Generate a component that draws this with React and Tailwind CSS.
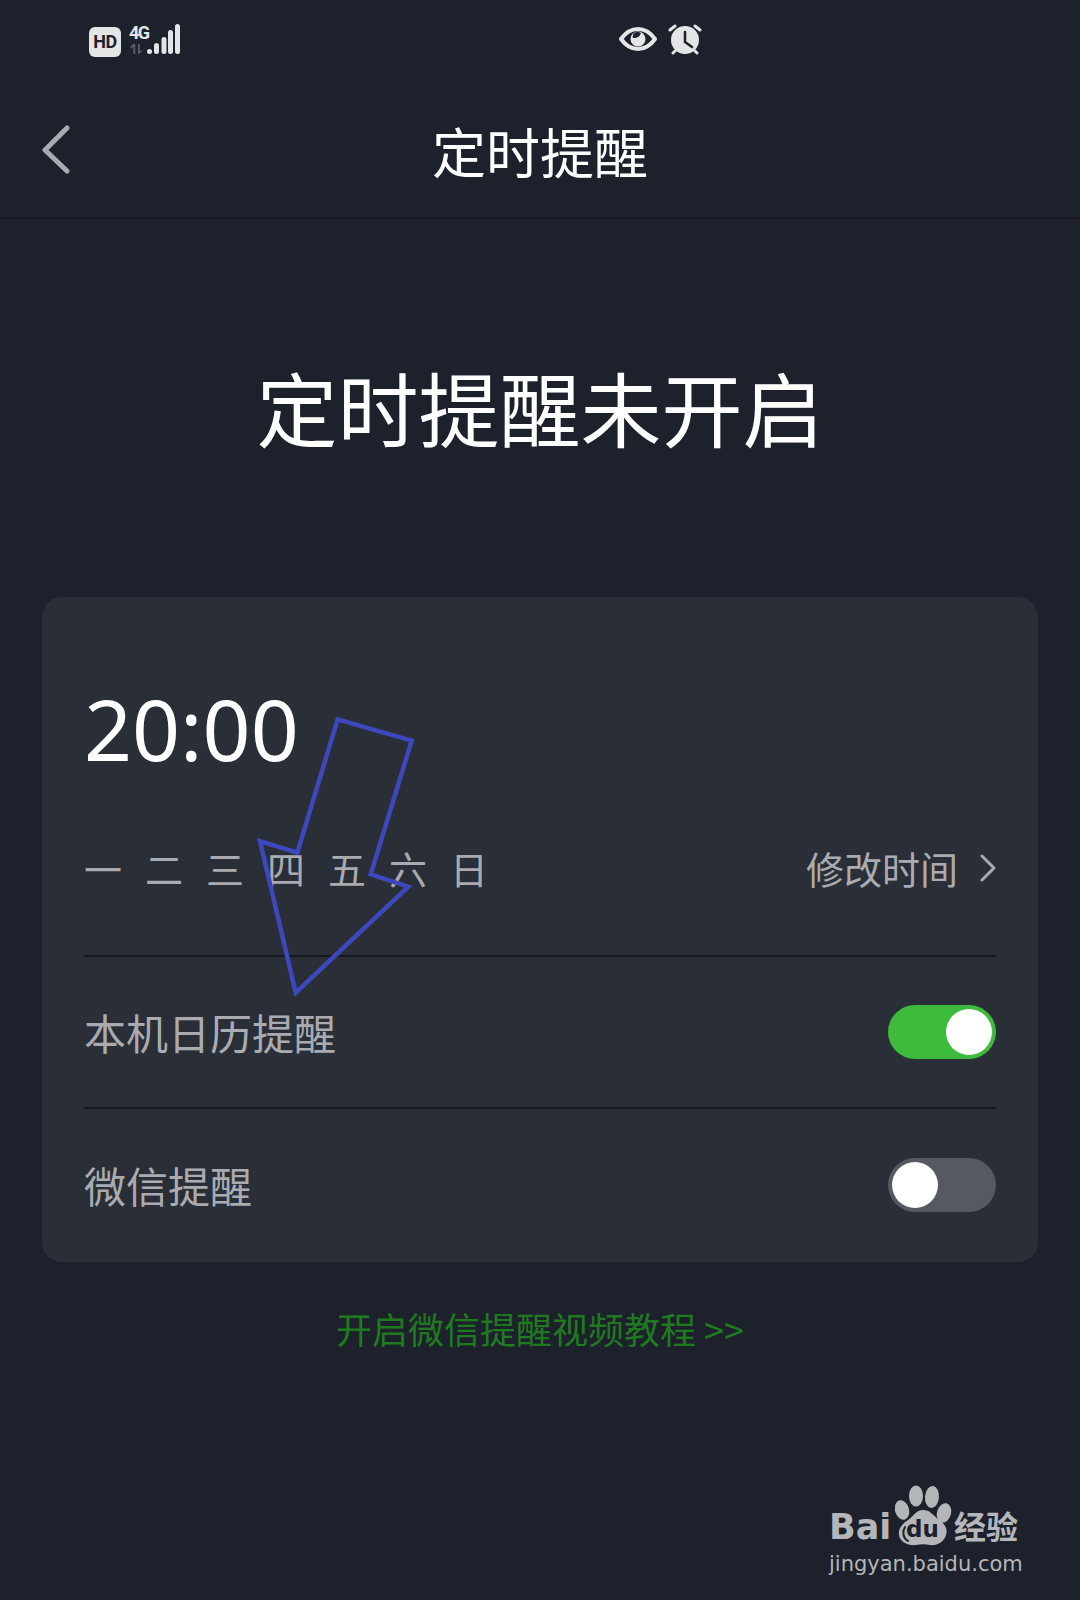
import React from 'react';

const cjk = 'font-["Noto_Sans_CJK_SC","Noto_Sans",sans-serif]';
const days = ['一', '二', '三', '四', '五', '六', '日'];

const Toggle = ({ on }) => (
  <div className={`flex h-[54px] w-[108px] items-center rounded-full px-[4px] ${on ? 'justify-end bg-[#3dbb3d]' : 'justify-start bg-[#565962]'}`}>
    <div className="h-[46px] w-[46px] rounded-full bg-white" />
  </div>
);

const Row = ({ label, on, height }) => (
  <div className={`flex items-center justify-between ${height}`}>
    <span className="text-[42px] leading-none text-[#a9abb0]">{label}</span>
    <Toggle on={on} />
  </div>
);

const StatusBar = () => (
  <div className="flex h-[80px] items-start pl-[89px] pt-[24px]">
    <div className="mt-[3px] flex h-[30px] w-[32px] items-center justify-center rounded-[6px] bg-[#e4e5e6] font-['Roboto',sans-serif] text-[18px] font-bold leading-none tracking-[-0.5px] text-[#1d212b]">
      HD
    </div>
    <div className="ml-[8px] flex h-[30px] w-[18px] flex-col">
      <span className="font-['Roboto',sans-serif] text-[18px] font-bold leading-[17px] tracking-[-1.5px] text-[#e4e5e6]">4G</span>
      <svg className="mt-[3px]" width="16" height="11" viewBox="0 0 16 11" fill="#5b5e64">
        <path d="M4 0h2v11H4V3.5L1 5V3zM9 0h2v7.5h3.5L9.5 11H9z" />
      </svg>
    </div>
    <svg width="33" height="31" viewBox="0 0 33 31" fill="#e4e5e6">
      <rect x="0" y="25" width="5" height="5" rx="2.5" />
      <rect x="7" y="19" width="5" height="11" rx="2.5" />
      <rect x="14.5" y="13" width="5" height="17" rx="2.5" />
      <rect x="21" y="6" width="5" height="24" rx="2.5" />
      <rect x="28" y="0" width="5" height="30" rx="2.5" />
    </svg>
    <svg className="ml-[439px] mt-[3px]" width="38" height="24" viewBox="0 0 38 24" fill="none">
      <path d="M2 12C7 5 13 2 19 2s12 3 17 10c-5 7-11 10-17 10S7 19 2 12z" stroke="#e4e5e6" strokeWidth="4" strokeLinejoin="round" />
      <circle cx="19" cy="12" r="7.5" fill="#e4e5e6" />
      <path d="M22 6c-1 3-3 5-8 5-1-3 1-6 4-6 2 0 3 0 4 1z" fill="#1d212b" />
    </svg>
    <svg className="ml-[11px]" width="34" height="32" viewBox="0 0 34 32" fill="none">
      <ellipse cx="17" cy="16" rx="14" ry="14" fill="#e4e5e6" />
      <path d="M17 8v10l7 5" stroke="#1d212b" strokeWidth="2.5" strokeLinecap="round" strokeLinejoin="round" />
      <path d="M2 6l5-4M32 6l-5-4M5 29l2-2M29 29l-2-2" stroke="#e4e5e6" strokeWidth="3" strokeLinecap="round" />
    </svg>
  </div>
);

const BaiduLogo = () => (
  <div className="absolute left-[829px] top-[1485px] flex w-[200px] flex-col text-[#b4b6b9]">
    <div className="flex h-[62px] items-end">
      <span className="w-[66px] font-['DejaVu_Sans',sans-serif] text-[35px] font-bold leading-[40px]">Bai</span>
      <div className="relative h-[62px] w-[58px] shrink-0">
        <svg className="absolute inset-0" width="58" height="62" viewBox="0 0 58 62" fill="#b4b6b9">
          <ellipse cx="7" cy="25" rx="7" ry="10" transform="rotate(-15 7 25)" />
          <ellipse cx="21" cy="11" rx="7" ry="10.5" />
          <ellipse cx="37" cy="12" rx="7" ry="11" transform="rotate(5 37 12)" />
          <ellipse cx="49" cy="28" rx="7" ry="10" transform="rotate(15 49 28)" />
          <path d="M28 25c7 0 10 5 16 10 6 4 9 9 7 15-2 7-9 11-16 10-4-1-9-1-14 0-8 1-16-3-17-10-1-6 3-11 9-15 6-4 8-10 15-10z" />
          <path d="M10 42c-3 5-2 11 3 14" stroke="#1d212b" strokeWidth="2" fill="none" strokeLinecap="round" />
        </svg>
        <span className="absolute left-[11px] top-[31px] font-['DejaVu_Sans',sans-serif] text-[23px] font-bold leading-[26px] text-[#1d212b]">du</span>
      </div>
      <span className={`ml-[1px] ${cjk} text-[32px] font-bold leading-[44px]`}>经验</span>
    </div>
    <span className="mt-[3px] font-['DejaVu_Sans',sans-serif] text-[21px] leading-[28px]">jingyan.baidu.com</span>
  </div>
);

const App = () => {
  return (
    <div className={`relative h-[1600px] w-[1080px] overflow-hidden bg-[#1d212b] ${cjk}`}>
      <StatusBar />

      {/* Header */}
      <div className="relative flex h-[139px] items-center justify-center border-b-2 border-[#15181f] pt-[5px]">
        <svg className="absolute left-[41px] top-[45px]" width="30" height="50" viewBox="0 0 30 50" fill="none">
          <path d="M26 3L4 25l22 21" stroke="#a9abb0" strokeWidth="5" strokeLinecap="round" strokeLinejoin="round" />
        </svg>
        <span className="text-[54px] leading-none text-white">定时提醒</span>
      </div>

      {/* Status heading */}
      <div className="flex h-[378px] items-start justify-center pt-[143px]">
        <span className="text-[81px] leading-[88px] text-white">定时提醒未开启</span>
      </div>

      {/* Card */}
      <div className="mx-[42px] h-[665px] rounded-[20px] bg-[#2a2e37] px-[42px] pt-[82px]">
        <div className="font-['Noto_Sans',sans-serif] text-[84px] leading-[100px] text-white">20:00</div>
        <div className="mt-[64px] flex h-[50px] items-center justify-between">
          <div className="flex gap-[23px] text-[38px] leading-none text-[#a9abb0]">
            {days.map((day) => (
              <span key={day}>{day}</span>
            ))}
          </div>
          <div className="flex items-center text-[38px] leading-none text-[#a9abb0]">
            <span>修改时间</span>
            <svg className="ml-[22px]" width="16" height="28" viewBox="0 0 16 28" fill="none">
              <path d="M2 2l12 12L2 26" stroke="#a9abb0" strokeWidth="3" strokeLinecap="round" strokeLinejoin="round" />
            </svg>
          </div>
        </div>
        <div className="mt-[62px] h-[2px] bg-[#15181f]" />
        <Row label="本机日历提醒" on height="h-[150px]" />
        <div className="h-[2px] bg-[#15181f]" />
        <Row label="微信提醒" on={false} height="h-[152px]" />
      </div>

      <div className="mt-[42px] text-center text-[36px] leading-[48px] text-[#1f7a1f]">开启微信提醒视频教程 &gt;&gt;</div>

      {/* Hand-drawn annotation arrow */}
      <svg className="absolute left-0 top-0" width="1080" height="1600" viewBox="0 0 1080 1600" fill="none">
        <path
          d="M337.7 719.3L411.7 740.7L370.7 874.3L408.3 886.7L295.7 992.7L260 841L297.3 852.7Z"
          stroke="#3d48bd"
          strokeWidth="4.5"
        />
      </svg>

      <BaiduLogo />
    </div>
  );
};

export default App;
